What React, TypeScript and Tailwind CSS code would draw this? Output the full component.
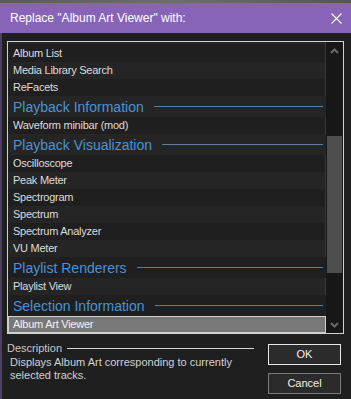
import React from "react";

type Row = { t: string; k: "item" | "header" | "sel" | "partial" };

const rows: Row[] = [
  { t: "", k: "partial" },
  { t: "Album List", k: "item" },
  { t: "Media Library Search", k: "item" },
  { t: "ReFacets", k: "item" },
  { t: "Playback Information", k: "header" },
  { t: "Waveform minibar (mod)", k: "item" },
  { t: "Playback Visualization", k: "header" },
  { t: "Oscilloscope", k: "item" },
  { t: "Peak Meter", k: "item" },
  { t: "Spectrogram", k: "item" },
  { t: "Spectrum", k: "item" },
  { t: "Spectrum Analyzer", k: "item" },
  { t: "VU Meter", k: "item" },
  { t: "Playlist Renderers", k: "header" },
  { t: "Playlist View", k: "item" },
  { t: "Selection Information", k: "header" },
  { t: "Album Art Viewer", k: "sel" },
];

const font = { fontFamily: '"Liberation Sans", Arial, sans-serif' };

export default function App() {
  return (
    <div className="w-[351px] h-[399px] overflow-hidden bg-[#1f1f1f] flex flex-col" style={font}>
      <div className="h-[3px] bg-gradient-to-r from-[#5a5a5a] via-[#6e6e6e] to-[#555555] shrink-0" />
      <div className="h-[30px] shrink-0 bg-[#8764b8] flex items-center pl-[10px] pr-[9px] text-white">
        <span className="text-[12px] leading-none flex-1">Replace "Album Art Viewer" with:</span>
        <svg width="11" height="11" viewBox="0 0 11 11" className="mt-[1px]">
          <path d="M0.5 0.5 L10.5 10.5 M10.5 0.5 L0.5 10.5" stroke="#ffffff" strokeWidth="1.1" />
        </svg>
      </div>
      <div className="flex-1 flex flex-col border-l-2 border-[#4b4060] pl-[5px] pr-[7px] pt-[8px]">
        <div className="h-[293px] border border-[#d2d2d2] flex overflow-hidden">
          <div className="flex-1 flex flex-col">
            {rows.map((r, i) => {
              const stripe = i % 2 === 0 ? "bg-[#252525]" : "bg-[#1f1f1f]";
              if (r.k === "partial")
                return <div key={i} className={`h-[3px] ${stripe} border-r border-[#383838]`} />;
              if (r.k === "header")
                return (
                  <div key={i} className={`h-[21px] ${stripe} flex items-center pl-[5px] pr-[3px]`}>
                    <span className="text-[14px] leading-none text-[#4a93d6] whitespace-nowrap">{r.t}</span>
                    <div className="flex-1 h-[1px] bg-[#5a7da0] ml-[10px]" />
                  </div>
                );
              if (r.k === "sel")
                return (
                  <div key={i} className="h-[17px] bg-[#787878] border border-[#cfcfcf] flex items-center pl-[4px]">
                    <span className="text-[11px] leading-none tracking-[-0.25px] text-[#f4f4f4] whitespace-nowrap">{r.t}</span>
                  </div>
                );
              return (
                <div key={i} className={`h-[17px] ${stripe} flex items-center pl-[5px] border-r border-[#383838]`}>
                  <span className="text-[11px] leading-none tracking-[-0.25px] text-[#dcdcdc] whitespace-nowrap">{r.t}</span>
                </div>
              );
            })}
          </div>
          <div className="w-[17px] bg-[#171717] flex flex-col items-center">
            <div className="h-[17px] flex items-center justify-center pt-[1px]">
              <svg width="9" height="6" viewBox="0 0 9 6">
                <path d="M1 5 L4.5 1.5 L8 5" stroke="#6a6a6a" strokeWidth="2" fill="none" />
              </svg>
            </div>
            <div className="h-[77px]" />
            <div className="w-[15px] h-[137px] bg-[#4e4e4e]" />
            <div className="flex-1" />
            <div className="h-[17px] flex items-center justify-center">
              <svg width="9" height="6" viewBox="0 0 9 6">
                <path d="M1 1 L4.5 4.5 L8 1" stroke="#6a6a6a" strokeWidth="2" fill="none" />
              </svg>
            </div>
          </div>
        </div>
        <div className="flex mt-[8px]">
          <div className="w-[247px] flex flex-col">
            <div className="flex items-center h-[13px]">
              <span className="text-[11px] leading-none text-[#c8c8c8]">Description</span>
              <div className="flex-1 h-[1px] bg-[#d4d4d4] ml-[5px]" />
            </div>
            <div className="pl-[3px] pt-[1px] text-[11px] leading-[13px] text-[#d2d2d2]">
              Displays Album Art corresponding to currently
              <br />
              selected tracks.
            </div>
          </div>
          <div className="ml-[14px] flex flex-col gap-[8px] pt-[2px]">
            <button className="w-[73px] h-[21px] bg-[#2b2b2b] border border-[#e8e8e8] text-[11px] text-[#f0f0f0] flex items-center justify-center">
              OK
            </button>
            <button className="w-[73px] h-[21px] bg-[#2b2b2b] border border-[#7a7a7a] text-[11px] text-[#f0f0f0] flex items-center justify-center">
              Cancel
            </button>
          </div>
        </div>
      </div>
    </div>
  );
}
